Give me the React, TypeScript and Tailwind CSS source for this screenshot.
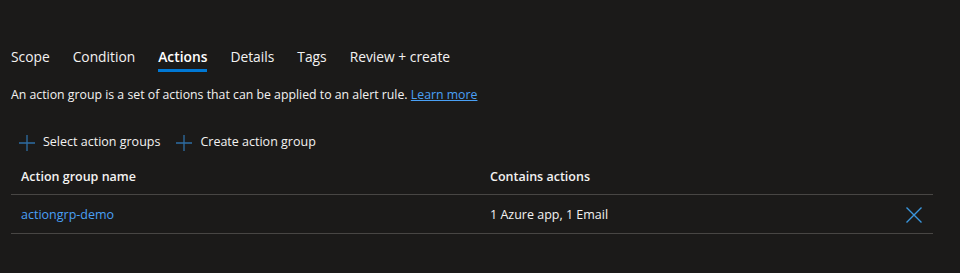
export default function App() {
  const tabs = ["Scope", "Condition", "Actions", "Details", "Tags", "Review + create"];
  const active = "Actions";

  const PlusIcon = () => (
    <svg width="16" height="16" viewBox="0 0 16 16" className="shrink-0">
      <path d="M8 0v16M0 8h16" stroke="#2e6da4" strokeWidth="1.3" fill="none" />
    </svg>
  );

  return (
    <div
      className="w-[960px] h-[273px] bg-[#1b1a19] text-[#f3f2f1] text-[12.5px] overflow-hidden"
      style={{ fontFamily: '"Segoe UI", "Open Sans", "Noto Sans", sans-serif' }}
    >
      <div className="pt-[46px] px-[11px]">
        {/* Tabs */}
        <div className="flex gap-[23px] text-[13.8px]">
          {tabs.map((tab) => (
            <div key={tab} className="flex flex-col">
              <span
                className={
                  "leading-[20px] pt-[1px] " + (tab === active ? "font-semibold text-white" : "text-[#f3f2f1]")
                }
              >
                {tab}
              </span>
              <div className={"mt-[2px] h-[3px] " + (tab === active ? "bg-[#0078d4]" : "bg-transparent")} />
            </div>
          ))}
        </div>

        <p className="mt-[13px] leading-[20px] text-[12.3px]">
          An action group is a set of actions that can be applied to an alert rule.{" "}
          <a href="#" className="text-[#4aa0f5] underline">
            Learn more
          </a>
        </p>

        {/* Command bar */}
        <div className="mt-[22px] flex h-[31px] items-center">
          <button className="flex items-center gap-[8px] px-[8px] h-full">
            <PlusIcon />
            <span>Select action groups</span>
          </button>
          <button className="flex items-center gap-[8px] px-[8px] h-full">
            <PlusIcon />
            <span>Create action group</span>
          </button>
        </div>

        {/* Table */}
        <div className="w-[922px]">
          <div className="flex h-[37px] items-center pt-[3px] border-b border-[#484644] font-semibold">
            <div className="w-[479px] pl-[10px]">Action group name</div>
            <div className="flex-1">Contains actions</div>
          </div>
          <div className="flex h-[39px] items-center border-b border-[#484644]">
            <div className="w-[479px] pl-[10px] pt-[3px]">
              <a href="#" className="text-[#4aa0f5]">
                actiongrp-demo
              </a>
            </div>
            <div className="flex-1 pt-[3px]">1 Azure app, 1 Email</div>
            <button className="pr-[11px] flex items-center pt-[1px]">
              <svg width="16" height="16" viewBox="0 0 16 16">
                <path d="M0.5 0.5l15 15M15.5 0.5l-15 15" stroke="#3a96dd" strokeWidth="1.4" fill="none" />
              </svg>
            </button>
          </div>
        </div>
      </div>
    </div>
  );
}
